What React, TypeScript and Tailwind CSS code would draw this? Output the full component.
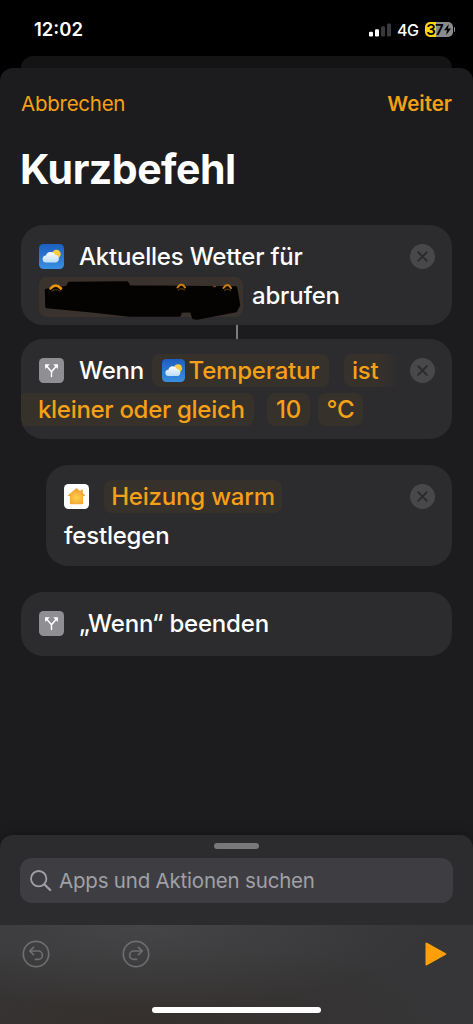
import React, { useId } from "react";
import { clsx } from "clsx";

interface ChildrenProps {
  children: React.ReactNode;
  className?: string;
}

const SignalIcon = () => (
  <svg width="22" height="14" viewBox="0 0 22 14">
    <rect x="0" y="8.8" width="4" height="4.7" rx="1.2" fill="#fff" />
    <rect x="6" y="6.2" width="4" height="7.3" rx="1.2" fill="#fff" />
    <rect x="12" y="3.2" width="4" height="10.3" rx="1.2" fill="#39393b" />
    <rect x="18" y="0.4" width="4" height="13.1" rx="1.2" fill="#39393b" />
  </svg>
);

const Battery = () => (
  <div className="flex items-center gap-px">
    <div className="flex h-[15.5px] w-7 items-center justify-center rounded-[5px] bg-linear-to-r from-[#fcd60a] from-38% to-[#8b8b8d] to-38%">
      <span className="text-[15px] leading-4 font-semibold tracking-[-0.8px] text-black">
        37
      </span>
      <svg width="7" height="11" viewBox="0 0 7 11" className="ml-px">
        <path d="M4.8 0 0 6.2h3L2.2 11 7 4.6H4z" fill="#000" />
      </svg>
    </div>
    <div className="h-[5px] w-[1.5px] rounded-r-full bg-[#8b8b8d]" />
  </div>
);

const WeatherIcon = ({ size = 25 }: { size?: number }) => {
  const id = useId();
  return (
    <svg width={size} height={size} viewBox="0 0 25 25" className="shrink-0">
      <defs>
        <linearGradient id={`${id}sky`} x1="0" y1="0" x2="0" y2="1">
          <stop offset="0" stopColor="#1c5fc0" />
          <stop offset="1" stopColor="#3a8fe0" />
        </linearGradient>
        <linearGradient id={`${id}cloud`} x1="0" y1="0" x2="0" y2="1">
          <stop offset="0" stopColor="#f9fbfe" />
          <stop offset="1" stopColor="#bcdcf7" />
        </linearGradient>
      </defs>
      <rect width="25" height="25" rx="4.5" fill={`url(#${id}sky)`} />
      <circle cx="17.4" cy="10" r="4.3" fill="#fbcb3c" />
      <path
        d="M7.4 18.6a3.5 3.5 0 0 1-.5-7 5 5 0 0 1 9.4-.6 3.9 3.9 0 0 1 .9 7.6z"
        fill={`url(#${id}cloud)`}
      />
    </svg>
  );
};

const BranchIcon = () => (
  <svg width="25" height="25" viewBox="0 0 25 25" className="shrink-0">
    <rect width="25" height="25" rx="4.5" fill="#8e8e93" />
    <path
      d="M12.5 18.5v-4.7L8 8.6M12.5 13.8 17 8.6"
      fill="none"
      stroke="#fff"
      strokeWidth="1.5"
      strokeLinecap="round"
      strokeLinejoin="round"
    />
    <path d="M6 6.2h4.8L6.2 11zM19 6.2h-4.8l4.6 4.8z" fill="#fff" />
  </svg>
);

const HomeIcon = () => {
  const id = useId();
  return (
    <svg width="25" height="25" viewBox="0 0 25 25" className="shrink-0">
      <defs>
        <radialGradient id={id} cx="0.5" cy="0.6" r="0.6">
          <stop offset="0" stopColor="#ffd24e" />
          <stop offset="1" stopColor="#ee9a2a" />
        </radialGradient>
      </defs>
      <rect width="25" height="25" rx="4.5" fill="#fff" />
      <path
        d="M12.5 4 4 11.2q-.5.7.4.8h1.5v7.2q0 1 1 1h11.2q1 0 1-1V12h1.5q.9-.1.4-.8l-2.2-1.9V5.8h-2.2v1.6z"
        fill={`url(#${id})`}
      />
    </svg>
  );
};

const CloseButton = () => (
  <button aria-label="Entfernen" className="mr-[17px] ml-auto shrink-0">
    <svg width="25" height="25" viewBox="0 0 25 25">
      <circle cx="12.5" cy="12.5" r="12.5" fill="#48484a" />
      <path
        d="m8.2 8.2 8.6 8.6m0-8.6-8.6 8.6"
        stroke="#2a2a2c"
        strokeWidth="1.9"
        strokeLinecap="round"
      />
    </svg>
  </button>
);

// Painted over the location name
const Scribble = () => (
  <svg width="204" height="44" viewBox="0 0 204 44" className="absolute top-0 left-0">
    <path
      d="M7 13 28 10 30 6 88 5.5 90.5 9.5 197 10.5 200 28 197 34 158 41.5 154.5 41 152 34 142 34.5 140.5 38.5 90 38.5 55 34.5 7.5 30z"
      fill="#050302"
      stroke="#050302"
      strokeWidth="2.5"
      strokeLinejoin="round"
    />
    <g fill="none" strokeLinecap="round">
      <path d="M11.5 11.5q5-6 10.5 0" stroke="#e5930f" strokeWidth="2.6" />
      <path d="M138.5 10.5q4-6 7.5 0M184.5 11q4-6 7.5 0" stroke="#c47d10" strokeWidth="2" />
      <path d="M13 14q4-3 8 0M139.5 13q3-2.5 6 0M185.5 13.500q3-2.500 6 0" stroke="#4a2d05" strokeWidth="1.5" />
      <path d="M174.5 9.5h2" stroke="#6b4811" strokeWidth="1.5" />
    </g>
  </svg>
);

const Card = ({ children, className }: ChildrenProps) => (
  <section
    className={clsx(
      "shrink-0 overflow-hidden rounded-[22px] bg-[#2c2c2e] py-[11.5px] pl-[18px]",
      className
    )}
  >
    {children}
  </section>
);

const Row = ({ children, className }: ChildrenProps) => (
  <div className={clsx("flex h-[39px] items-center whitespace-nowrap", className)}>
    {children}
  </div>
);

const Label = ({ children, className }: ChildrenProps) => (
  <span className={clsx("shrink-0 pt-px", className)}>{children}</span>
);

const Token = ({ children, className }: ChildrenProps) => (
  <span
    className={clsx(
      "flex h-[33px] shrink-0 items-center justify-center rounded-lg bg-[#37312b] text-[#f6a015]",
      className
    )}
  >
    {children}
  </span>
);

const UndoIcon = ({ flipped = false }: { flipped?: boolean }) => (
  <svg
    width="28"
    height="28"
    viewBox="0 0 28 28"
    fill="none"
    stroke="#6e6e70"
    strokeWidth="1.7"
    strokeLinecap="round"
    strokeLinejoin="round"
    className={clsx(flipped && "-scale-x-100")}
  >
    <circle cx="14" cy="14" r="12.7" />
    <path d="M11.5 7.3 7.7 11l3.8 3.7M8 11h8.2a4.2 4.2 0 0 1 0 8.4h-2.7" />
  </svg>
);

const App: React.FC = () => {
  return (
    <main className="flex h-[1024px] w-[473px] flex-col overflow-hidden bg-black font-['Inter','Liberation_Sans',sans-serif] text-white">
      {/* Status bar */}
      <header className="flex h-14 shrink-0 items-center pt-[3px] pr-[18px] pl-[34px]">
        <span className="text-[18.5px] font-semibold">12:02</span>
        <div className="ml-auto flex items-center">
          <SignalIcon />
          <span className="mr-[6px] ml-[6px] text-[16px] font-medium tracking-[-0.5px]">4G</span>
          <Battery />
        </div>
      </header>

      <div className="mx-[21px] h-3 shrink-0 rounded-t-xl bg-[#141415]" />

      <div className="flex flex-1 flex-col rounded-t-[13px] bg-[#1c1c1e]">
        <nav className="flex h-[72px] shrink-0 items-center justify-between px-[21px] text-[20.5px] text-[#f6a015]">
          <button className="tracking-[-0.25px]">Abbrechen</button>
          <button className="font-semibold">Weiter</button>
        </nav>
        <h1 className="h-[85px] shrink-0 px-[20px] pt-[4px] text-[41px] leading-[50px] font-bold tracking-[-0.5px]">
          Kurzbefehl
        </h1>

        {/* Actions */}
        <div className="flex flex-1 flex-col px-[21px] text-[24px] font-medium tracking-[-0.2px]">
          <Card className="h-[100px]">
            <Row>
              <WeatherIcon />
              <Label className="ml-[15px]">Aktuelles Wetter für</Label>
              <CloseButton />
            </Row>
            <Row>
              <span className="relative mt-[3px] h-10 w-[204px] shrink-0 rounded-lg bg-[#3a332d]">
                <Scribble />
              </span>
              <Label className="ml-[9px]">abrufen</Label>
            </Row>
          </Card>

          <div className="ml-[215px] h-[14px] w-[2px] shrink-0 bg-[#7c7c80]" />

          <Card className="h-[100px]">
            <Row>
              <BranchIcon />
              <Label className="ml-[15px] w-[73px]">Wenn</Label>
              <Token className="h-[30px] w-[177px] gap-[4px]">
                <WeatherIcon size={23} />
                <Label>Temperatur</Label>
              </Token>
              <Token className="ml-[15px] w-[56px] justify-start bg-transparent bg-linear-to-r from-[#37312b] from-60% to-[#2c2c2e] pl-2">
                <Label>ist</Label>
              </Token>
              <CloseButton />
            </Row>
            <Row>
              <Token className="-ml-[18px] w-[233px] justify-start rounded-l-none pl-[17px]">
                <Label className="tracking-[-0.3px]">kleiner oder gleich</Label>
              </Token>
              <Token className="ml-[13px] w-[43px]">
                <Label>10</Label>
              </Token>
              <Token className="ml-[8px] w-[45px]">
                <Label>°C</Label>
              </Token>
            </Row>
          </Card>

          <Card className="mt-[26px] ml-[25px] h-[101px]">
            <Row>
              <HomeIcon />
              <Token className="ml-[15px] w-[178px]">
                <Label>Heizung warm</Label>
              </Token>
              <CloseButton />
            </Row>
            <Row>
              <Label>festlegen</Label>
            </Row>
          </Card>

          <Card className="mt-[26px] h-[64px]">
            <Row>
              <BranchIcon />
              <Label className="ml-[15px]">„Wenn“ beenden</Label>
            </Row>
          </Card>
        </div>

        {/* Search drawer */}
        <div className="flex h-[90px] shrink-0 flex-col items-center rounded-t-[13px] bg-[#2c2c2e] px-[20px] pt-2 shadow-[0_-2px_12px_rgba(0,0,0,0.25)]">
          <div className="h-[6px] w-[45px] shrink-0 rounded-full bg-[#78787b]" />
          <div className="mt-[9px] flex h-[45px] w-full items-center rounded-xl bg-[#3e3e42] pl-[10px] text-[#a0a0a6]">
            <svg
              width="22"
              height="22"
              viewBox="0 0 22 22"
              fill="none"
              stroke="currentColor"
              strokeLinecap="round"
            >
              <circle cx="8.7" cy="8.7" r="7.7" strokeWidth="1.8" />
              <path d="m14.5 14.5 5.7 5.5" strokeWidth="2.3" />
            </svg>
            <span className="ml-[7px] pt-[2px] text-[20.5px] tracking-[-0.2px]">
              Apps und Aktionen suchen
            </span>
          </div>
        </div>

        {/* Toolbar */}
        <footer className="flex h-[99px] shrink-0 flex-col items-center bg-[#363638] bg-[radial-gradient(ellipse_at_30%_0%,#454547_0%,transparent_60%),radial-gradient(ellipse_at_30%_100%,#35302d_0%,transparent_70%)]">
          <div className="flex h-[57px] w-full items-center pr-[26px] pl-[22px]">
            <UndoIcon />
            <div className="ml-[72px]">
              <UndoIcon flipped />
            </div>
            <svg width="22" height="24" viewBox="0 0 22 24" className="ml-auto">
              <path
                d="M1.5 1.5v21L20.3 12z"
                fill="#ff9f0a"
                stroke="#ff9f0a"
                strokeWidth="2"
                strokeLinejoin="round"
              />
            </svg>
          </div>
          <div className="mt-[25px] h-[6px] w-[169px] rounded-full bg-white" />
        </footer>
      </div>
    </main>
  );
};

export default App;
